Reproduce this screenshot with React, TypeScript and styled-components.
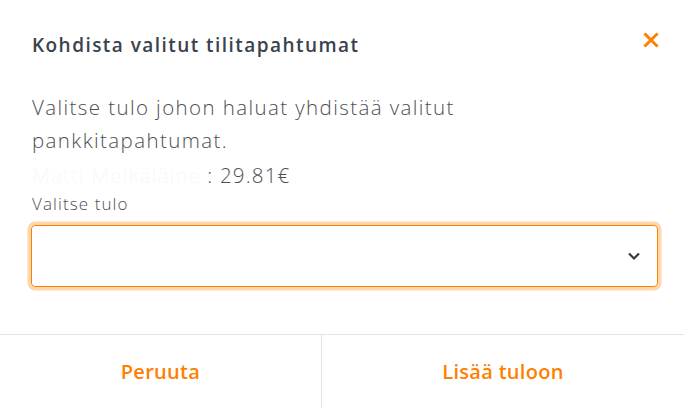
import React from "react";
import styled, { createGlobalStyle } from "styled-components";

const Global = createGlobalStyle`
  html, body { margin: 0; padding: 0; background: #fff; }
  body { font-family: "Open Sans", sans-serif; }
  * { box-sizing: border-box; }
`;

const Modal = styled.div`
  width: 684px;
  height: 408px;
  display: flex;
  flex-direction: column;
  background: #fff;
`;

const Header = styled.div`
  display: flex;
  align-items: flex-start;
  justify-content: space-between;
  padding: 32px 22px 0 32px;
`;

const Title = styled.h2`
  margin: 0;
  font-size: 19px;
  line-height: 26px;
  font-weight: 600;
  color: #3a424d;
  letter-spacing: 1.45px;
`;

const Close = styled.button`
  border: 0;
  background: none;
  padding: 0;
  margin-top: -3px;
  width: 22px;
  height: 22px;
  display: flex;
  align-items: center;
  justify-content: center;
  cursor: pointer;
`;

const Body = styled.div`
  padding: 33px 27px 0 32px;
  display: flex;
  flex-direction: column;
  flex: 1;
`;

const Text = styled.p`
  margin: 0;
  width: 490px;
  font-size: 20.5px;
  line-height: 33px;
  color: #4b4f55;
  font-weight: 300;
  letter-spacing: 1.4px;
`;

const Amount = styled.div`
  font-size: 20.5px;
  line-height: 35px;
  margin-top: 1px;
  color: #4b4f55;
  font-weight: 300;
  letter-spacing: 1.2px;
`;

const Hidden = styled.span`
  color: #f8f8f8;
  padding-right: 6px;
`;

const Label = styled.label`
  font-size: 17px;
  line-height: 22px;
  color: #4b4f55;
  font-weight: 300;
  letter-spacing: 1.1px;
`;

const Select = styled.div`
  margin-top: 10px;
  height: 62px;
  width: 627px;
  margin-left: -1px;
  border: 1px solid #ff8000;
  border-radius: 4px;
  box-shadow: 0 0 0 3.5px #ffd7ac;
  display: flex;
  align-items: center;
  justify-content: flex-end;
  padding-right: 16px;
`;

const Footer = styled.div`
  display: grid;
  grid-template-columns: 321px 1fr;
  border-top: 1px solid #e3e3e3;
  height: 74px;
`;

const FooterButton = styled.button<{ $divider?: boolean }>`
  border: 0;
  background: none;
  border-left: ${(p) => (p.$divider ? "1px solid #e3e3e3" : "0")};
  font-family: "Open Sans", sans-serif;
  font-size: 20px;
  font-weight: 600;
  color: #ff7f00;
  cursor: pointer;
  padding: 0;
  letter-spacing: 0.3px;
`;

export default function App() {
  return (
    <>
      <Global />
      <Modal>
        <Header>
          <Title>Kohdista valitut tilitapahtumat</Title>
          <Close aria-label="close">
            <svg width="16" height="16" viewBox="0 0 16 16">
              <path d="M2.5 2.5 L13.5 13.5 M13.5 2.5 L2.5 13.5" stroke="#ff7f00" strokeWidth="3" strokeLinecap="square" />
            </svg>
          </Close>
        </Header>
        <Body>
          <Text>Valitse tulo johon haluat yhdistää valitut pankkitapahtumat.</Text>
          <Amount>
            <Hidden>Matti Meikäläine</Hidden>: 29.81€
          </Amount>
          <Label>Valitse tulo</Label>
          <Select>
            <svg width="14" height="10" viewBox="0 0 14 10">
              <path d="M2 2.5 L7 7.5 L12 2.5" fill="none" stroke="#343a40" strokeWidth="2.2" />
            </svg>
          </Select>
        </Body>
        <Footer>
          <FooterButton>Peruuta</FooterButton>
          <FooterButton $divider>Lisää tuloon</FooterButton>
        </Footer>
      </Modal>
    </>
  );
}
